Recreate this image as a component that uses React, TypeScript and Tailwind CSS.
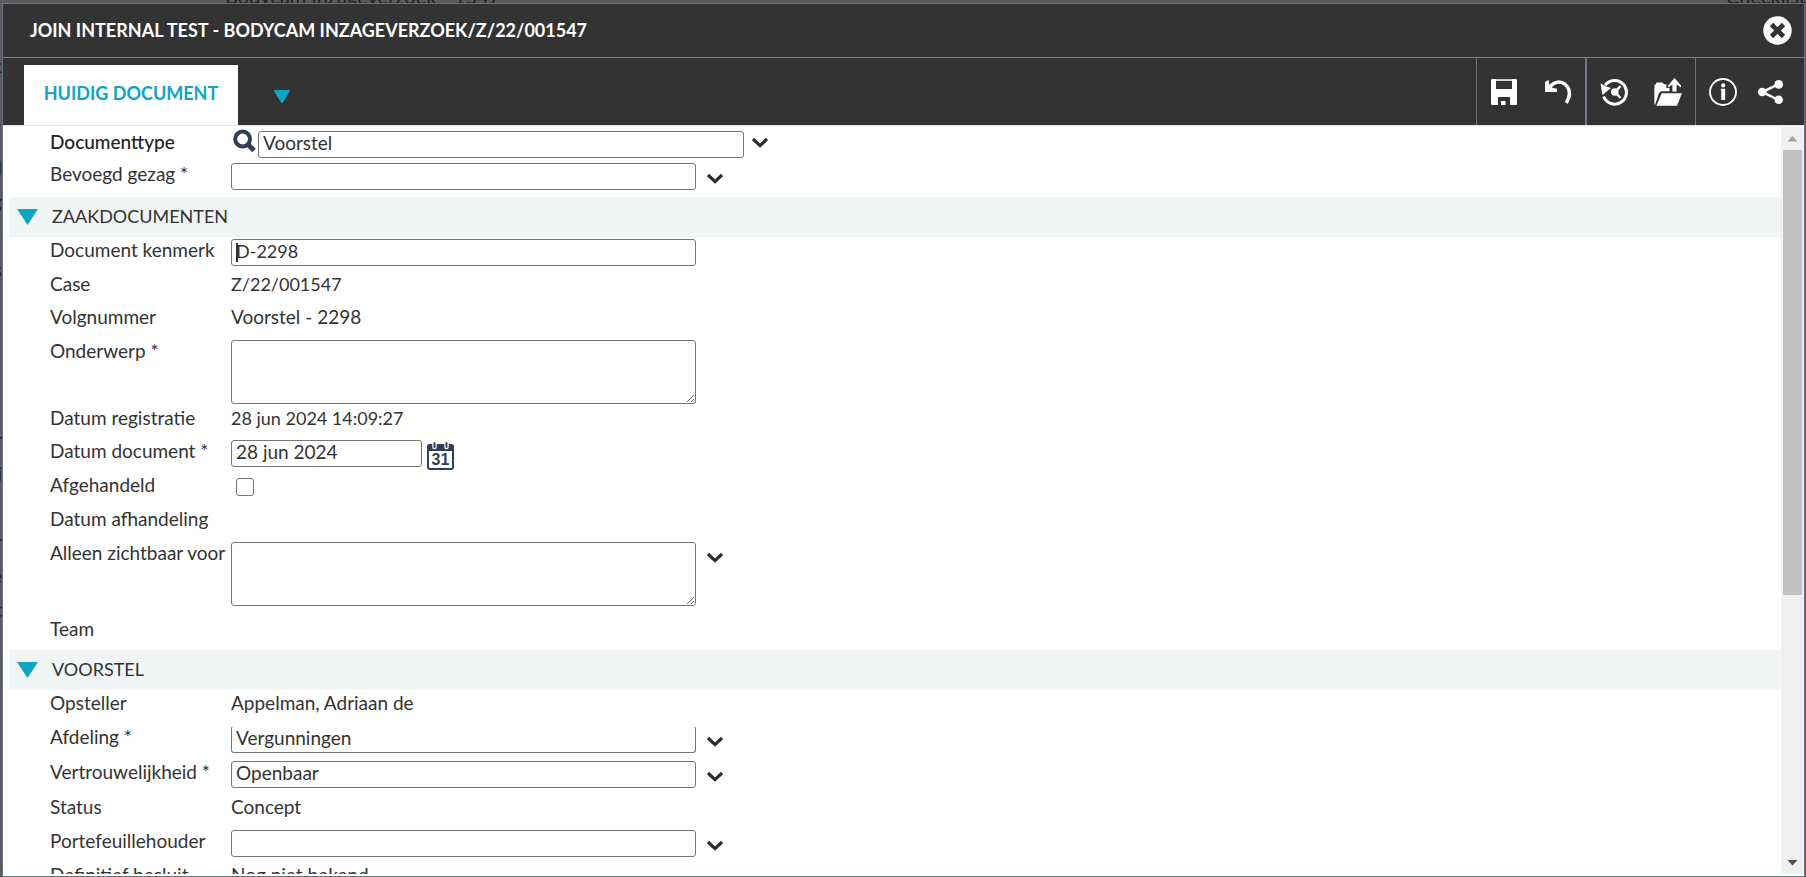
import React from "react";

type RowProps = {
  id?: string;
  label: string;
  height?: string;
  children?: React.ReactNode;
};

const fieldClass =
  "block h-[27px] rounded-[3px] border border-[#767676] bg-white pl-1 pr-1 pb-0.5 text-[#333] outline-none";
const areaClass =
  "block h-16 w-[465px] resize rounded-[3px] border border-[#767676] bg-white px-[5px] text-[19px] text-[#333] outline-none";

function Row({ id, label, height = "h-[34px]", children }: RowProps) {
  return (
    <div className={`flex shrink-0 items-start ${height}`}>
      {id ? (
        <label htmlFor={id} className="w-[181px] shrink-0 whitespace-nowrap leading-[26px]">
          {label}
        </label>
      ) : (
        <span className="w-[181px] shrink-0 whitespace-nowrap leading-[26px]">{label}</span>
      )}
      {children}
    </div>
  );
}

function Value({ children, numeric = false }: { children: string; numeric?: boolean }) {
  return (
    <span
      className={
        numeric ? "whitespace-nowrap text-[18px] leading-[26px]" : "whitespace-nowrap leading-[26px]"
      }
    >
      {children}
    </span>
  );
}

function Chevron({ label, className }: { label: string; className: string }) {
  return (
    <button type="button" aria-label={label} className={className}>
      <svg width="16" height="12" viewBox="0 0 16 12" className="block" fill="none">
        <path d="M1 2 L8 8.6 L15 2" stroke="#2b2b2b" strokeWidth="3.2" />
      </svg>
    </button>
  );
}

function Choice({ id, value = "", border = "" }: { id: string; value?: string; border?: string }) {
  return (
    <div className="flex items-start pt-0.5">
      <input id={id} defaultValue={value} className={`${fieldClass} ${border} w-[465px] text-[19px]`} />
      <Chevron label="Keuzelijst openen" className="ml-[11px] mt-2.5" />
    </div>
  );
}

function Section({ title, children }: { title: string; children: React.ReactNode }) {
  return (
    <section>
      <h2 className="bg-[#f1f5f6]">
        <button type="button" className="flex h-10 w-full items-center pb-0.5 pl-2 text-[18px]">
          <svg width="21" height="16" viewBox="0 0 21 16" className="mr-3.5 mt-0.5 block">
            <path d="M0 0 H21 L10.5 16 Z" fill="#0ca5c4" />
          </svg>
          {title}
        </button>
      </h2>
      <div className="pl-[41px]">{children}</div>
    </section>
  );
}

function ToolButton({ label, children }: { label: string; children: React.ReactNode }) {
  return (
    <button type="button" aria-label={label} className="shrink-0">
      <svg width="28" height="28" viewBox="0 0 28 28" fill="#fff" className="block">
        {children}
      </svg>
    </button>
  );
}

function Toolbar() {
  return (
    <div className="flex shrink-0 items-stretch">
      <div className="flex items-center gap-[26px] border-l border-[#6b7280] pl-[13px] pr-[13px]">
        <ToolButton label="Opslaan">
          <path fillRule="evenodd" d="M2 1 H26 L27 2 V27 H20 V19 H8 V27 H2 L1 26 V2 Z M6 3 V11 H22 V3 Z" />
          <rect x="6" y="1" width="16" height="1.6" fill="#c4c4c4" />
          <rect x="11" y="23" width="4.5" height="4" />
        </ToolButton>
        <ToolButton label="Ongedaan maken">
          <path d="M6 8.5 C11 3 17 3 21 6.2 C26.5 11 26.4 18 22.3 25" fill="none" stroke="#fff" strokeWidth="3.4" />
          <path d="M1 4 L4.6 2 L5.4 7.6 L9 10 L13 10.8 V14 H1 Z" />
        </ToolButton>
      </div>
      <div className="flex items-center gap-[26px] border-l-2 border-[#6b7686] px-[13px]">
        <ToolButton label="Versies">
          <path d="M5.2 7.2 A11.8 11.8 0 1 1 3.6 18.5" fill="none" stroke="#fff" strokeWidth="3" />
          <path d="M0.5 5.5 L4 7.2 L6.5 8.6 L11 10 L2.4 17 Z" />
          <circle cx="14.8" cy="14" r="3.8" />
          <path d="M15 14 L20.5 8.2 M15 14 L20.5 20" stroke="#fff" strokeWidth="2.4" />
        </ToolButton>
        <ToolButton label="Uploaden">
          <path d="M0.4 26.5 V7 L2 6.3 L2.4 4.6 H8.6 L10 6.3 H12.4 V10 H15.5 V13.2 H7 L5 15 L1.2 26.5 Z" />
          <path d="M7.6 15.2 H28 L23 27.8 H2.4 Z" />
          <path d="M20.5 0 L27 7.4 V9.6 L22.6 6.6 V13.4 H18.4 V6.6 L14.2 9.6 V7.4 Z" />
        </ToolButton>
      </div>
      <div className="flex items-center gap-5 border-l border-[#6b7280] pl-[13px] pr-[19px]">
        <ToolButton label="Informatie">
          <circle cx="14" cy="14" r="13" fill="none" stroke="#fff" strokeWidth="1.9" />
          <circle cx="14.2" cy="7.4" r="2.1" />
          <path d="M11.8 10.8 H16.2 V22 H12.3 V12.6 H11.8 Z" />
        </ToolButton>
        <ToolButton label="Delen">
          <path d="M21.6 6.2 L5.4 14 L21.6 22" fill="none" stroke="#fff" strokeWidth="2.5" />
          <circle cx="5.2" cy="14" r="4.3" />
          <circle cx="21.7" cy="6.4" r="4.3" />
          <circle cx="21.7" cy="21.8" r="4.3" />
        </ToolButton>
      </div>
    </div>
  );
}

const edgeLetters = ["x", "", "", "d", "g", "", "s", "", "", "", "", "r", "i", "", "r", "e", "t"];

function Backdrop() {
  return (
    <div aria-hidden="true" className="absolute inset-0 overflow-hidden text-[20px] text-[#1d2023]">
      <div className="-mt-3.5 flex h-5 justify-between pl-[225px] leading-5">
        <span>Bodycam Inzageverzoek - 1547</span>
        <span>Checklist</span>
      </div>
      <div className="mt-[42px] flex w-0.5 flex-col items-end overflow-hidden">
        {edgeLetters.map((letter, i) => (
          <span key={i} className="h-[34px] leading-[34px]">
            {letter}
          </span>
        ))}
      </div>
    </div>
  );
}

export default function App() {
  return (
    <div className="relative flex h-screen flex-col overflow-hidden bg-[#5b5b5d] pl-0.5 pr-px pt-[3px] font-['Lato','Open_Sans',sans-serif] text-[19px] text-[#333]">
      <Backdrop />
      <main className="relative flex min-h-0 flex-1 flex-col border border-[#6b7280] bg-white">
        <header className="flex h-[54px] shrink-0 items-center justify-between border-b border-[#7a828e] bg-[#333] pl-[27px] pr-3">
          <h1 className="text-[18px] font-bold text-white">
            JOIN INTERNAL TEST - BODYCAM INZAGEVERZOEK/Z/22/001547
          </h1>
          <button type="button" aria-label="Sluiten">
            <svg width="29" height="29" viewBox="0 0 29 29" className="block">
              <circle cx="14.5" cy="14.5" r="14.2" fill="#fff" />
              <path d="M8.5 8.5 L20.5 20.5 M20.5 8.5 L8.5 20.5" stroke="#333" strokeWidth="4.6" />
            </svg>
          </button>
        </header>

        <nav className="flex h-[68px] shrink-0 justify-between border-b border-[#e4e4e4] bg-[#333] pl-[21px]">
          <div className="flex items-end">
            <button
              type="button"
              className="flex h-[60px] w-[214px] items-center justify-center bg-white pb-1 text-[18px] font-bold text-[#0ca5c4]"
            >
              HUIDIG DOCUMENT
            </button>
            <button type="button" aria-label="Meer tabbladen" className="mb-[22px] ml-9">
              <svg width="16" height="13" viewBox="0 0 16 13" className="block">
                <path d="M0.5 0 H15.5 L16 1 L8.6 13 H7.4 L0 1 Z" fill="#0ca5c4" />
              </svg>
            </button>
          </div>
          <Toolbar />
        </nav>

        <div className="flex min-h-0 flex-1 pb-0.5">
          <form className="flex min-w-0 flex-1 flex-col overflow-hidden pl-1.5">
            <div className="pl-[41px] pt-[3px]">
              <div className="flex h-8 items-start">
                <label htmlFor="type" className="w-[182px] shrink-0 font-medium leading-[26px] text-[#222]">
                  Documenttype
                </label>
                <button type="button" aria-label="Zoeken">
                  <svg width="24" height="24" viewBox="0 0 24 24" className="block" fill="none" stroke="#2e4057">
                    <circle cx="10.6" cy="10" r="7.4" strokeWidth="4" />
                    <path d="M16 15.5 L22 21.5" strokeWidth="5" />
                  </svg>
                </button>
                <div className="flex items-start pl-0.5 pt-0.5">
                  <input id="type" defaultValue="Voorstel" className={`${fieldClass} w-[486px] text-[19px]`} />
                  <Chevron label="Keuzelijst openen" className="ml-2 mt-1.5" />
                </div>
              </div>
              <Row id="gezag" label="Bevoegd gezag *" height="h-9">
                <Choice id="gezag" />
              </Row>
            </div>

            <Section title="ZAAKDOCUMENTEN">
              <Row id="kenmerk" label="Document kenmerk">
                <div className="relative pt-0.5">
                  <input id="kenmerk" defaultValue="D-2298" className={`${fieldClass} w-[465px] text-[18px]`} />
                  <span className="absolute left-[5px] top-1.5 h-[19px] w-0.5 bg-[#333]" />
                </div>
              </Row>
              <Row label="Case" height="h-[33px]">
                <Value numeric>Z/22/001547</Value>
              </Row>
              <Row label="Volgnummer">
                <Value>Voorstel - 2298</Value>
              </Row>
              <Row id="onderwerp" label="Onderwerp *" height="h-[67px]">
                <div className="pt-0.5">
                  <textarea id="onderwerp" className={areaClass} />
                </div>
              </Row>
              <Row label="Datum registratie" height="h-[33px]">
                <Value numeric>28 jun 2024 14:09:27</Value>
              </Row>
              <Row id="datum" label="Datum document *">
                <div className="flex items-start gap-[5px] pt-0.5">
                  <input id="datum" defaultValue="28 jun 2024" className={`${fieldClass} w-[191px] text-[19px]`} />
                  <button type="button" aria-label="Datum kiezen" className="pt-0.5">
                    <svg width="27" height="28" viewBox="0 0 27 28" className="block">
                      <rect x="1" y="3.5" width="25" height="23.5" rx="2" fill="#fff" stroke="#2e4057" strokeWidth="2" />
                      <path d="M0 9 V4.5 Q0 2 2.5 2 H24.5 Q27 2 27 4.5 V9 Z" fill="#2e4057" />
                      <path d="M7.5 0 V5 M19.5 0 V5" stroke="#fff" strokeWidth="4.4" strokeLinecap="round" />
                      <path d="M7.5 1 V5 M19.5 1 V5" stroke="#2e4057" strokeWidth="2" strokeLinecap="round" />
                      <text
                        x="13.5"
                        y="23"
                        textAnchor="middle"
                        fontFamily="Liberation Sans, sans-serif"
                        fontWeight="700"
                        fontSize="16"
                        fill="#2e4057"
                      >
                        31
                      </text>
                    </svg>
                  </button>
                </div>
              </Row>
              <Row id="afgehandeld" label="Afgehandeld">
                <input
                  id="afgehandeld"
                  type="checkbox"
                  className="ml-[5px] mt-1.5 block h-[18px] w-[18px] appearance-none rounded-[3px] border border-[#767676] bg-white"
                />
              </Row>
              <Row label="Datum afhandeling" />
              <Row id="zichtbaar" label="Alleen zichtbaar voor" height="h-[76px]">
                <div className="flex items-start pt-0.5">
                  <textarea id="zichtbaar" className={areaClass} />
                  <Chevron label="Keuzelijst openen" className="ml-[11px] mt-2.5" />
                </div>
              </Row>
              <Row label="Team" />
            </Section>

            <Section title="VOORSTEL">
              <Row label="Opsteller">
                <Value>Appelman, Adriaan de</Value>
              </Row>
              <Row id="afdeling" label="Afdeling *" height="h-[35px]">
                <Choice id="afdeling" value="Vergunningen" border="border-t-transparent" />
              </Row>
              <Row id="vertrouwelijk" label="Vertrouwelijkheid *" height="h-[35px]">
                <Choice id="vertrouwelijk" value="Openbaar" />
              </Row>
              <Row label="Status">
                <Value>Concept</Value>
              </Row>
              <Row id="portefeuille" label="Portefeuillehouder">
                <Choice id="portefeuille" />
              </Row>
              <Row label="Definitief besluit">
                <Value>Nog niet bekend</Value>
              </Row>
            </Section>
          </form>

          <div aria-hidden="true" className="mt-px flex w-[23px] shrink-0 flex-col items-center bg-[#f0f0f0]">
            <svg width="23" height="23" viewBox="0 0 23 23" className="block shrink-0">
              <path d="M6.5 14.5 L11.5 9 L16.5 14.5 Z" fill="#a3a3a3" />
            </svg>
            <div className="h-[445px] w-[19px] bg-[#c1c1c1]" />
            <svg width="23" height="23" viewBox="0 0 23 23" className="mt-auto block shrink-0">
              <path d="M6.5 9 H16.5 L11.5 14.5 Z" fill="#505050" />
            </svg>
          </div>
        </div>
      </main>
    </div>
  );
}
